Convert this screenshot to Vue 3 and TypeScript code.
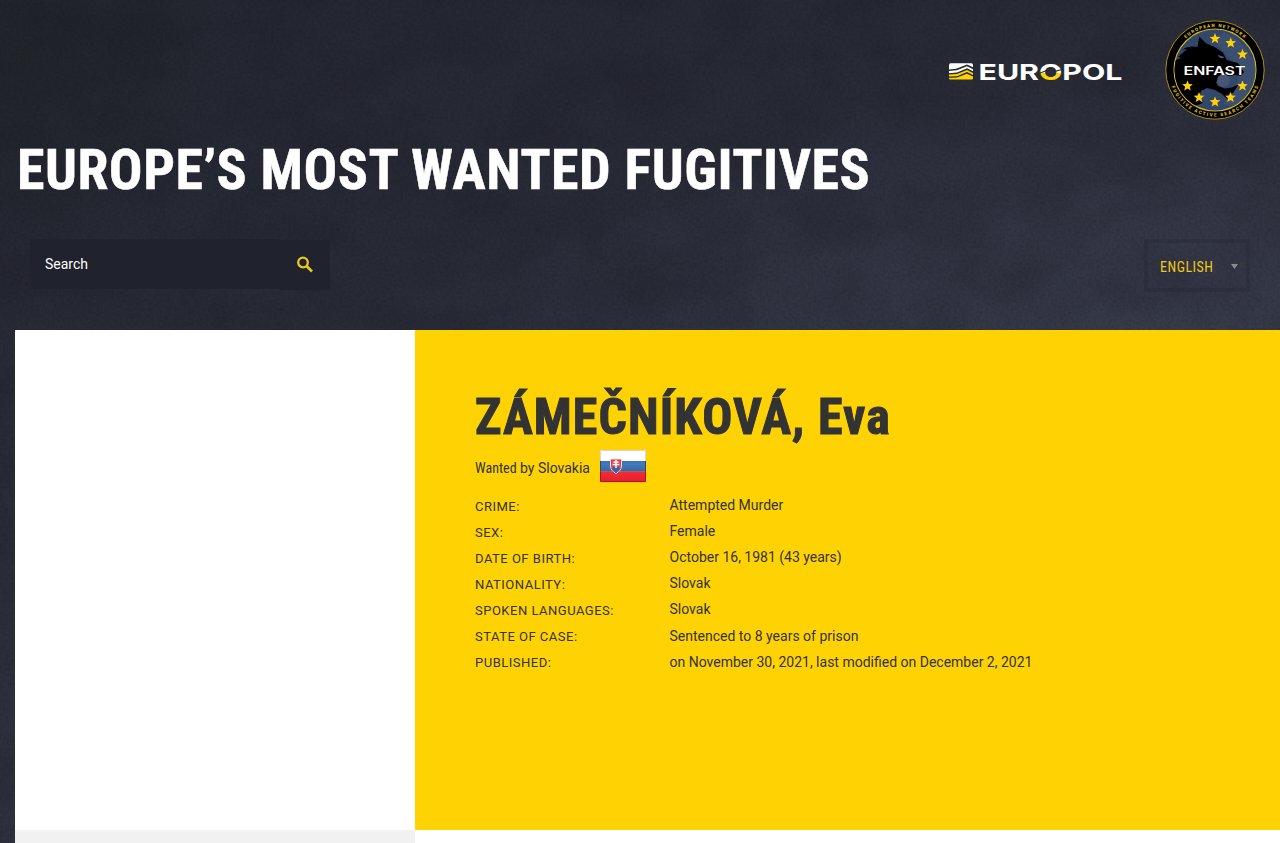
<script setup lang="ts">
interface Fact {
  label: string
  value: string
}

const facts: Fact[] = [
  { label: 'Crime:', value: 'Attempted Murder' },
  { label: 'Sex:', value: 'Female' },
  { label: 'Date of birth:', value: 'October 16, 1981 (43 years)' },
  { label: 'Nationality:', value: 'Slovak' },
  { label: 'Spoken languages:', value: 'Slovak' },
  { label: 'State of case:', value: 'Sentenced to 8 years of prison' },
  { label: 'Published:', value: 'on November 30, 2021, last modified on December 2, 2021' },
]

// Star centres inside the 100x100 ENFAST badge
const stars: [number, number][] = [
  [50, 18.7], [65.7, 23], [77.5, 34.4], [77.5, 66], [65.5, 77.5], [50, 82], [34, 77.5], [22.5, 66],
]

function starPoints(cx: number, cy: number): string {
  const points: string[] = []
  for (let i = 0; i < 10; i++) {
    const r = i % 2 === 0 ? 5.6 : 2.4
    const a = (Math.PI / 5) * i - Math.PI / 2
    points.push(`${(cx + r * Math.cos(a)).toFixed(2)},${(cy + r * Math.sin(a)).toFixed(2)}`)
  }
  return points.join(' ')
}
</script>

<template>
  <div class="page">
    <svg class="texture" width="1280" height="843" aria-hidden="true">
      <filter id="mottle" x="0" y="0" width="100%" height="100%" color-interpolation-filters="sRGB">
        <feTurbulence type="fractalNoise" baseFrequency="0.012 0.016" numOctaves="6" seed="8" />
        <feColorMatrix values="0 0 0 0 0.08  0 0 0 0 0.08  0 0 0 0 0.11  2.2 0 0 0 -0.85" />
      </filter>
      <filter id="grain" x="0" y="0" width="100%" height="100%" color-interpolation-filters="sRGB">
        <feTurbulence type="fractalNoise" baseFrequency="0.35" numOctaves="2" seed="3" />
        <feColorMatrix values="0 0 0 0 0.05  0 0 0 0 0.05  0 0 0 0 0.08  1.6 0 0 0 -0.6" />
      </filter>
      <rect width="1280" height="843" filter="url(#mottle)" opacity="0.2" />
      <rect width="1280" height="843" filter="url(#grain)" opacity="0.18" />
    </svg>

    <header class="header">
      <div class="logos">
        <svg class="europol" width="174" height="18" viewBox="0 0 174 18" role="img" aria-label="Europol">
          <defs>
            <linearGradient id="split" gradientUnits="userSpaceOnUse" x1="0" y1="0" x2="0" y2="18">
              <stop offset="0.56" stop-color="#fff" />
              <stop offset="0.56" stop-color="#ffd204" />
            </linearGradient>
          </defs>
          <path d="M0 2Q0 0.300 1.700 0.300H22.300Q24 0.300 24 2V4.300L18 1.400L7 5.800L0 6.400Z" fill="#fff" />
          <path d="M0 8L8 7.200L18 3.200L24 6.200V8.200L18 5.300L8 9.600L0 10.200Z" fill="#fff" />
          <path d="M0 11.600L8 11L18 7L24 10V12L18 9.100L8 13.200L0 13.600Z" fill="#ffd204" />
          <path d="M0 14.800L8 14.400L18 10.800L24 13.600V15Q24 16.500 22.500 16.500H1.500Q0 16.500 0 15Z" fill="#ffd204" />
          <text class="wordmark" x="29.500" y="16.500" textLength="144" lengthAdjust="spacingAndGlyphs">EUR<tspan fill="url(#split)">O</tspan>POL</text>
          <path d="M91 10L99 7L106 8.400L113 6.500" fill="none" stroke="#2b2d3b" stroke-width="1.200" />
        </svg>

        <svg class="enfast" width="100" height="100" viewBox="0 0 100 100" role="img" aria-label="ENFAST">
          <defs>
            <path id="arc-top" d="M7 50A43 43 0 0 1 93 50" />
            <path id="arc-bottom" d="M3.500 50A46.500 46.500 0 0 0 96.500 50" />
            <clipPath id="disc"><circle cx="50" cy="50" r="40.500" /></clipPath>
          </defs>
          <circle cx="50" cy="50" r="49.200" fill="#000" stroke="#b89c12" stroke-width="0.900" />
          <circle cx="50" cy="50" r="41" fill="#33476a" stroke="#d5b51b" stroke-width="1.100" />
          <g clip-path="url(#disc)">
            <path d="M48 20L60 12L78 24L91 45L88 72L73 87L58 84L74 60L68 42L58 31Z" fill="#465674" opacity="0.550" />
            <path d="M5 42L16.700 38L13 37L22 29L17 29.500Q24 25 32.500 27L34.300 16.700L41 23.300L50 27.300L58 32.700L61.700 40L73 43L79 52L76 56L70 55L55 57L51 62L53 66L60 68.500L67 67.500L74 64L68 73L64 74L62 79L57 74L50 70L42 68L36 71L34 78L38 83L27 87L5 80Z" fill="#000" />
            <path d="M52.500 35L59.500 37L57 38.600Q54 38 52.500 35Z" fill="#52627e" />
            <circle cx="58.500" cy="60.500" r="6.500" fill="#465674" />
          </g>
          <polygon v-for="(s, i) in stars" :key="i" :points="starPoints(s[0], s[1])" fill="#ffd204" />
          <text class="ring"><textPath href="#arc-top" startOffset="50%" text-anchor="middle" textLength="64">EUROPEAN NETWORK</textPath></text>
          <text class="ring"><textPath href="#arc-bottom" startOffset="50%" text-anchor="middle" textLength="112">FUGITIVE ACTIVE SEARCH TEAMS</textPath></text>
          <text class="badge-name" x="18.500" y="54.500" textLength="62" lengthAdjust="spacingAndGlyphs">ENFAST</text>
        </svg>
      </div>

      <h1 class="title">EUROPE’S MOST WANTED FUGITIVES</h1>

      <div class="tools">
        <form class="search" @submit.prevent>
          <label class="search-field">Search</label>
          <button class="search-button" aria-label="Search">
            <svg width="18" height="18" viewBox="0 0 18 18">
              <circle cx="7" cy="6.500" r="4.800" fill="none" stroke="#eec718" stroke-width="2.300" />
              <path d="M10.300 9.800L16 15.500" stroke="#eec718" stroke-width="2.700" />
            </svg>
          </button>
        </form>
        <div class="language">
          <span>ENGLISH</span>
          <i class="caret"></i>
        </div>
      </div>
    </header>

    <main class="content">
      <section class="profile">
        <div class="photo"></div>
        <div class="details">
          <h2 class="name">ZÁMEČNÍKOVÁ, Eva</h2>
          <div class="wanted">
            <span><span class="narrow">Wanted</span> by Slovakia</span>
            <svg class="flag" width="48" height="36" viewBox="0 0 48 36" role="img" aria-label="Slovakia">
              <defs>
                <linearGradient id="gloss" x1="0" y1="0" x2="0" y2="1">
                  <stop offset="0" stop-color="#fff" stop-opacity="0" />
                  <stop offset="0.450" stop-color="#fff" stop-opacity="0.130" />
                  <stop offset="1" stop-color="#000" stop-opacity="0.050" />
                </linearGradient>
              </defs>
              <rect x="1" y="3" width="46" height="31.500" fill="#9c7c00" opacity="0.350" />
              <rect x="1" y="2" width="46" height="11" fill="#fff" />
              <rect x="1" y="13" width="46" height="10.500" fill="#2864ae" />
              <rect x="1" y="23.500" width="46" height="10.300" fill="#f82330" />
              <rect x="1" y="2" width="46" height="31.800" fill="url(#gloss)" />
              <path d="M11.500 11H22.500V18Q22 23 17 25.500Q12 23 11.500 18Z" fill="#e34148" stroke="#e5e2e8" />
              <path d="M12.500 20.500Q14.500 18 17 20Q19.500 18 21.500 20.500Q20 23.500 17 24.700Q14 23.500 12.500 20.500Z" fill="#3267ae" />
              <path d="M17 12V20M14.500 14H19.500M13.500 16.500H20.500" stroke="#fff" stroke-width="1.400" />
              <path d="M1.500 13V2.500H46.500V13" fill="none" stroke="#d8d5dc" />
              <path d="M1.500 13V23.500M46.500 13V23.500" stroke="#244b83" />
              <path d="M1.500 23.500V33.400H46.500V23.500" fill="none" stroke="#9d1620" />
            </svg>
          </div>
          <dl class="facts">
            <div v-for="fact in facts" :key="fact.label" class="fact">
              <dt>{{ fact.label }}</dt>
              <dd>{{ fact.value }}</dd>
            </div>
          </dl>
        </div>
      </section>
      <div class="below">
        <div class="below-side"></div>
      </div>
    </main>
  </div>
</template>

<style>
body {
  margin: 0;
  overflow: hidden;
}
</style>

<style scoped>
.page {
  position: relative;
  width: 1280px;
  height: 843px;
  overflow: hidden;
  box-sizing: border-box;
  font-family: Roboto, 'Liberation Sans', sans-serif;
  font-size: 14px;
  color: #333;
  background:
    radial-gradient(circle at 30px 60px, rgba(33, 38, 42, 0.8), transparent 200px),
    radial-gradient(ellipse 700px 240px at 1180px 320px, rgba(62, 66, 82, 0.6), transparent),
    linear-gradient(160deg, #242630 0, #282a36 25%, #2f313f 60%, #343647 100%);
}
.texture {
  position: absolute;
  inset: 0;
}
.header {
  position: relative;
  height: 330px;
  display: flex;
  flex-direction: column;
}
.logos {
  display: flex;
  justify-content: flex-end;
  align-items: center;
  gap: 42px;
  padding: 20px 15px 0 0;
  height: 100px;
}
.europol {
  overflow: visible;
  margin-top: 4px;
}
.wordmark {
  font: 700 22px Inter, sans-serif;
  fill: #fff;
}
.ring {
  font: 900 4.6px Roboto, sans-serif;
  fill: #d8b820;
}
.badge-name {
  font: 600 12px Inter, sans-serif;
  fill: #fff;
}
.title {
  margin: 15px 0 0 17px;
  font-family: 'Roboto Condensed', Roboto, sans-serif;
  font-stretch: 75%;
  font-size: 56px;
  line-height: 70px;
  font-weight: 700;
  letter-spacing: 0.48px;
  -webkit-text-stroke: 0.5px #fff;
  color: #fff;
  white-space: nowrap;
}
.tools {
  display: flex;
  justify-content: space-between;
  align-items: flex-start;
  padding: 34px 30px 0;
}
.search {
  display: flex;
  align-items: flex-start;
}
.search-field {
  box-sizing: border-box;
  width: 250px;
  height: 50px;
  padding-left: 15px;
  line-height: 50px;
  color: #fff;
  background: #20222d;
}
.search-button {
  display: flex;
  align-items: center;
  justify-content: center;
  width: 50px;
  height: 50px;
  margin-top: 1px;
  padding: 0;
  border: 0;
  background: #20222d;
}
.language {
  box-sizing: border-box;
  display: flex;
  align-items: center;
  justify-content: space-between;
  width: 106px;
  height: 53px;
  padding: 2px 8px 0 12px;
  border: 4px solid rgba(37, 39, 52, 0.4);
  font-family: 'Roboto Condensed', Roboto, sans-serif;
  font-stretch: 75%;
  letter-spacing: 0.5px;
  color: #f0c818;
}
.caret {
  width: 7px;
  height: 5px;
  background: #8b8b8b;
  clip-path: polygon(0 0, 100% 0, 50% 100%);
}
.content {
  position: relative;
  margin-left: 15px;
}
.profile {
  display: flex;
  height: 500px;
}
.photo {
  width: 400px;
  background: #fff;
}
.details {
  flex: 1;
  padding: 52px 60px 0;
  background: #ffd204;
}
.name {
  margin: 0;
  font-family: 'Roboto Condensed', Roboto, sans-serif;
  font-stretch: 75%;
  font-size: 50px;
  line-height: 70px;
  font-weight: 700;
  letter-spacing: 1.08px;
  -webkit-text-stroke: 1px #333;
  white-space: nowrap;
}
.wanted {
  display: flex;
  gap: 9px;
  height: 42px;
  margin-top: -2px;
  line-height: 36px;
}
.wanted > span {
  white-space: pre;
}
.narrow {
  font-family: 'Roboto Condensed', Roboto, sans-serif;
  font-stretch: 75%;
}
.flag {
  margin-top: -2px;
}
.facts {
  margin: 0;
  padding-top: 1px;
}
.fact {
  display: flex;
  height: 26.080px;
  line-height: 24px;
  white-space: nowrap;
}
dt {
  width: 194.500px;
  padding-top: 2px;
  font-size: 13px;
  letter-spacing: 0.5px;
  text-transform: uppercase;
}
dd {
  margin: 0;
  padding-top: 0.140px;
}
.below {
  height: 13px;
  background: #fff;
}
.below-side {
  width: 400px;
  height: 100%;
  background: #f1f1f1;
}
</style>
